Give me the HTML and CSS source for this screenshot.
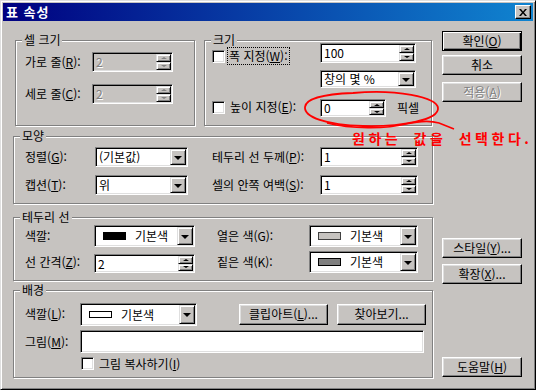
FILE: index.html
```html
<!DOCTYPE html>
<html lang="ko">
<head>
<meta charset="utf-8">
<link rel="stylesheet" href="styles.css">
</head>
<body>
<div class="window">
  <div class="titlebar">
    <span class="title">표 속성</span>
    <span class="close"><svg width="8" height="7" viewBox="0 0 8 7"><path d="M0 0h2l2 2.5L6 0h2L5 3.5 8 7H6L4 4.5 2 7H0l3-3.5z" fill="#000"/></svg></span>
  </div>
  <div class="main">
    <div class="left">
      <div class="row1">
        <div class="group g-cell">
          <span class="legend">셀 크기</span>
          <div class="frow r20">
            <span class="lbl w67">가로 줄(<u>R</u>):</span>
            <div class="field dis w81"><span class="val">2</span><span class="spin"><span class="sb"><i class="up"></i></span><span class="sb"><i class="dn"></i></span></span></div>
          </div>
          <div class="frow r20 mt12">
            <span class="lbl w67">세로 줄(<u>C</u>):</span>
            <div class="field dis w81"><span class="val">2</span><span class="spin"><span class="sb"><i class="up"></i></span><span class="sb"><i class="dn"></i></span></span></div>
          </div>
        </div>
        <div class="group g-size">
          <span class="legend">크기</span>
          <div class="frow r20">
            <span class="cbwrap"><span class="cb c7"></span><span class="focus">폭 지정(<u>W</u>):</span></span>
            <div class="field w96"><span class="val">100</span><span class="spin"><span class="sb"><i class="up"></i></span><span class="sb"><i class="dn"></i></span></span></div>
          </div>
          <div class="frow r18 mt7">
            <span class="sp108"></span>
            <div class="field w96"><span class="val">창의 몇 %</span><span class="ddb"><i class="tri"></i></span></div>
          </div>
          <div class="frow r18 mt11">
            <span class="cbwrap"><span class="cb c2"></span><span class="plain">높이 지정(<u>E</u>):</span></span>
            <div class="field w66"><span class="val">0</span><span class="spin"><span class="sb"><i class="up"></i></span><span class="sb"><i class="dn"></i></span></span></div>
            <span class="unit">픽셀</span>
          </div>
        </div>
      </div>

      <div class="group g-shape">
        <span class="legend">모양</span>
        <div class="frow r20">
          <span class="lbl w70">정렬(<u>G</u>):</span>
          <div class="field w93"><span class="val">(기본값)</span><span class="ddb"><i class="tri"></i></span></div>
          <span class="lbl w108 ml24">테두리 선 두께(<u>P</u>):</span>
          <div class="field w98"><span class="val">1</span><span class="spin"><span class="sb"><i class="up"></i></span><span class="sb"><i class="dn"></i></span></span></div>
        </div>
        <div class="frow r20 mt8">
          <span class="lbl w70">캡션(<u>T</u>):</span>
          <div class="field w93"><span class="val">위</span><span class="ddb"><i class="tri"></i></span></div>
          <span class="lbl w108 ml24">셀의 안쪽 여백(<u>S</u>):</span>
          <div class="field w98"><span class="val">1</span><span class="spin"><span class="sb"><i class="up"></i></span><span class="sb"><i class="dn"></i></span></span></div>
        </div>
      </div>

      <div class="group g-border">
        <span class="legend">테두리 선</span>
        <div class="frow r22">
          <span class="lbl w69">색깔:</span>
          <div class="field w101"><span class="val"><span class="sw sw-black"></span>기본색</span><span class="ddb"><i class="tri"></i></span></div>
          <span class="lbl w92 ml22">열은 색(G):</span>
          <div class="field w109"><span class="val"><span class="sw sw-light"></span>기본색</span><span class="ddb"><i class="tri"></i></span></div>
        </div>
        <div class="frow r22 mt4">
          <span class="lbl w69">선 간격(<u>Z</u>):</span>
          <div class="field w101 h19"><span class="val">2</span><span class="spin"><span class="sb"><i class="up"></i></span><span class="sb"><i class="dn"></i></span></span></div>
          <span class="lbl w92 ml22">짙은 색(K):</span>
          <div class="field w109"><span class="val"><span class="sw sw-dark"></span>기본색</span><span class="ddb"><i class="tri"></i></span></div>
        </div>
      </div>

      <div class="group g-bg">
        <span class="legend">배경</span>
        <div class="frow r24">
          <span class="lbl w55">색깔(<u>L</u>):</span>
          <div class="field w117 h23"><span class="val"><span class="sw sw-white"></span>기본색</span><span class="ddb"><i class="tri"></i></span></div>
          <span class="btn w89 h21 ml42">클립아트(<u>L</u>)...</span>
          <span class="btn w89 h21 ml9">찾아보기...</span>
        </div>
        <div class="frow r23 mt4">
          <span class="lbl w55">그림(<u>M</u>):</span>
          <div class="field w344"><span class="val"></span></div>
        </div>
        <div class="frow r13 mt4">
          <span class="cb ml56"></span><span class="plain ml5">그림 복사하기(<u>I</u>)</span>
        </div>
      </div>
    </div>

    <div class="right">
      <span class="btn default">확인(<u>O</u>)</span>
      <span class="btn mt4">취소</span>
      <span class="btn mt7 disabled">적용(<u>A</u>)</span>
      <span class="btn mt136">스타일(<u>Y</u>)...</span>
      <span class="btn mt6">확장(<u>X</u>)...</span>
      <span class="btn mt73">도움말(<u>H</u>)</span>
    </div>
  </div>

  <svg class="annot" width="536" height="390" viewBox="0 0 536 390">
    <path d="M352 92 C395 88 436 96 437 107 C438 119 400 126 362 125 C325 124 303 116 304 106 C305 97 325 93 352 92" fill="none" stroke="#f00" stroke-width="1.8"/>
    <path d="M326 122 C350 128 385 128 405 123 C418 120 428 119 438 122 L453 128" fill="none" stroke="#f00" stroke-width="1.6"/>
  </svg>
  <span class="note">원하는 값을 선택한다.</span>
</div>
</body>
</html>
```

FILE: styles.css
```css
* { box-sizing: border-box; }
html, body { margin: 0; padding: 0; }
body {
  width: 536px;
  height: 390px;
  overflow: hidden;
  background: #c6c3c0;
  font-family: "Noto Sans CJK KR", "Liberation Sans", sans-serif;
  font-size: 12px;
  line-height: 14px;
  color: #000;
}
u { text-decoration: underline; text-underline-offset: 1px; }

.window {
  position: relative;
  width: 536px;
  height: 390px;
  background: #c6c3c0;
  border: 1px solid;
  border-color: #dfdfdf #000 #000 #dfdfdf;
  box-shadow: inset 1px 1px #fff, inset -1px -1px #808080;
  padding: 2px;
}

.titlebar {
  height: 18px;
  background: linear-gradient(to right, #000080, #1084d0);
  display: flex;
  align-items: center;
  justify-content: space-between;
  padding: 0 2px 0 3px;
}
.title { color: #fff; font-weight: bold; font-size: 13px; letter-spacing: 1px; }
.close {
  width: 16px; height: 14px;
  background: #c6c3c0;
  border: 1px solid;
  border-color: #fff #000 #000 #fff;
  box-shadow: inset -1px -1px #808080;
  display: flex; align-items: center; justify-content: center;
}

.main { display: flex; }
.left { width: 420px; margin-left: 10px; padding-top: 19px; }
.right { width: 80px; margin-left: 9px; padding-top: 10px; display: flex; flex-direction: column; }

.row1 { display: flex; height: 86px; }

.group {
  position: relative;
  border: 1px solid #808080;
  box-shadow: inset 1px 1px #fff, 1px 1px #fff;
}
.legend {
  position: absolute;
  top: -8px;
  left: 6px;
  padding: 0 2px;
  background: #c6c3c0;
  line-height: 14px;
}
.g-cell { width: 180px; margin-left: 2px; padding: 11px 0 0 9px; }
.g-size { width: 228px; margin-left: 9px; padding: 2px 0 0 7px; }
.g-shape { height: 68px; margin-top: 10px; padding: 10px 0 0 11px; }
.g-border { height: 64px; margin-top: 13px; padding: 7px 0 0 11px; }
.g-bg { height: 88px; margin-top: 9px; padding: 11px 0 0 11px; }

.frow { display: flex; align-items: center; }
.r13 { height: 13px; }
.r18 { height: 18px; }
.r20 { height: 20px; }
.r22 { height: 22px; }
.r23 { height: 23px; }
.r24 { height: 24px; }

.mt4 { margin-top: 4px; } .mt6 { margin-top: 6px; } .mt7 { margin-top: 7px; }
.mt8 { margin-top: 8px; } .mt11 { margin-top: 11px; } .mt12 { margin-top: 12px; }
.mt73 { margin-top: 73px; } .mt136 { margin-top: 136px; }
.ml5 { margin-left: 5px; } .ml9 { margin-left: 9px; } .ml22 { margin-left: 22px; }
.ml24 { margin-left: 24px; } .ml42 { margin-left: 42px; } .ml56 { margin-left: 56px; }

.lbl { flex: none; white-space: nowrap; }
.w55 { width: 55px; } .w66 { width: 66px; } .w67 { width: 67px; } .w69 { width: 69px; }
.w70 { width: 70px; } .w81 { width: 81px; } .w89 { width: 89px; } .w92 { width: 92px; }
.w93 { width: 93px; } .w96 { width: 96px; } .w98 { width: 98px; } .w101 { width: 101px; }
.w108 { width: 108px; } .w109 { width: 109px; } .w117 { width: 117px; } .w344 { width: 344px; }

.sp108 { width: 108px; flex: none; }

.field {
  flex: none;
  height: 100%;
  display: flex;
  align-items: stretch;
  background: #fff;
  border: 1px solid;
  border-color: #808080 #fff #fff #808080;
  box-shadow: inset 1px 1px #000, inset -1px -1px #dfdfdf;
  padding: 1px;
}
.field.h19 { height: 19px; align-self: flex-end; }
.field.h23 { height: 23px; align-self: flex-end; }
.field.dis { background: #c6c3c0; color: #808080; }
.field .val {
  flex: 1;
  display: flex;
  align-items: center;
  padding-left: 2px;
  white-space: nowrap;
  line-height: 12px;
}
.field.dis .val { text-shadow: 1px 1px #fff; }

.spin { width: 15px; flex: none; display: flex; flex-direction: column; }
.sb {
  flex: 1;
  background: #c6c3c0;
  border: 1px solid;
  border-color: #dfdfdf #000 #000 #dfdfdf;
  box-shadow: inset 1px 1px #fff, inset -1px -1px #808080;
  display: flex; align-items: center; justify-content: center;
}
.up { width: 0; height: 0; border-left: 3px solid transparent; border-right: 3px solid transparent; border-bottom: 2px solid #000; }
.dn { width: 0; height: 0; border-left: 3px solid transparent; border-right: 3px solid transparent; border-top: 2px solid #000; }
.field.dis .up { border-bottom-color: #808080; }
.field.dis .dn { border-top-color: #808080; }

.ddb {
  width: 16px;
  flex: none;
  background: #c6c3c0;
  border: 1px solid;
  border-color: #dfdfdf #000 #000 #dfdfdf;
  box-shadow: inset 1px 1px #fff, inset -1px -1px #808080;
  display: flex; align-items: center; justify-content: center;
}
.tri { width: 0; height: 0; border-left: 4px solid transparent; border-right: 4px solid transparent; border-top: 4px solid #000; margin-top: 1px; }

.sw { display: inline-block; width: 23px; height: 8px; border: 1px solid #000; margin: 0 9px 0 5px; flex: none; }
.sw-black { background: #000; }
.sw-light { background: #c6c3c0; border-color: #404040; }
.sw-dark { background: #808080; border-color: #000; }
.sw-white { background: #fff; height: 7px; }

.cbwrap { width: 108px; flex: none; display: flex; align-items: flex-start; height: 100%; }
.cb {
  width: 13px; height: 13px; flex: none;
  background: #fff;
  border: 1px solid;
  border-color: #808080 #fff #fff #808080;
  box-shadow: inset 1px 1px #000, inset -1px -1px #dfdfdf;
}
.c7 { margin-top: 7px; }
.c2 { margin-top: 2px; }
.focus { margin-left: 3px; margin-top: 5px; outline: 1px dotted #000; padding: 1px; white-space: nowrap; line-height: 14px; }
.plain { margin-left: 5px; white-space: nowrap; margin-top: 1px; }
.frow.r13 .plain { margin-top: 0; }
.unit { margin-left: 11px; }

.btn {
  width: 80px;
  height: 20px;
  flex: none;
  display: flex;
  align-items: center;
  justify-content: center;
  background: #c6c3c0;
  border: 1px solid;
  border-color: #fff #000 #000 #fff;
  box-shadow: inset -1px -1px #808080, inset 1px 1px #dfdfdf;
  white-space: nowrap;
}
.btn.w89 { width: 89px; }
.btn.h21 { height: 21px; }
.btn.default {
  border-color: #000;
  box-shadow: inset 1px 1px #fff, inset -1px -1px #000, inset -2px -2px #808080;
}
.btn.disabled { color: #808080; text-shadow: 1px 1px #fff; }

.annot { position: absolute; left: 0; top: 0; pointer-events: none; }
.note {
  position: absolute;
  left: 351px;
  top: 129px;
  color: #f00;
  font-weight: bold;
  font-size: 14px;
  line-height: 16px;
  letter-spacing: 3.5px;
  word-spacing: 5px;
  white-space: nowrap;
}
```
